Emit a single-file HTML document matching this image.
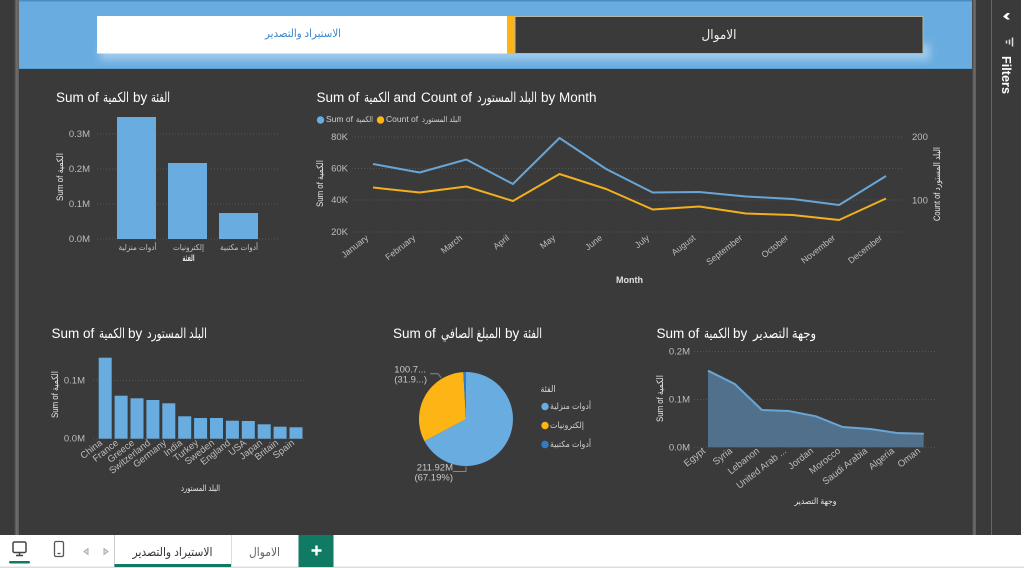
<!DOCTYPE html>
<html><head><meta charset="utf-8"><style>
html,body{margin:0;padding:0;width:1024px;height:568px;overflow:hidden;background:#fff}
svg{display:block;font-family:"Liberation Sans","DejaVu Sans",sans-serif;filter:blur(.35px)}
.t text{font-size:13.500px;fill:#fff}
.a{font-size:8.800px;fill:#bdbdbd}
.y{font-size:9.500px;fill:#bdbdbd}
.n{font-size:8.500px;fill:#e8e8e8}
.g{stroke:#555;stroke-width:1;stroke-dasharray:1 2;fill:none}
</style></head><body>
<svg width="1024" height="568" viewBox="0 0 1024 568" xmlns="http://www.w3.org/2000/svg">
<defs>
<linearGradient id="s" x1="0" x2="1" y1="0" y2="0"><stop offset="0" stop-color="#3a3a3a"/><stop offset=".5" stop-color="#707070"/><stop offset="1" stop-color="#5a5a5a"/></linearGradient>
<filter id="b" x="-5%" y="-100%" width="110%" height="300%"><feGaussianBlur stdDeviation="4"/></filter>
</defs>
<rect width="1021" height="535" fill="#3a3a3a"/>
<rect x="14" width="5" height="535" fill="url(#s)"/>
<rect x="972" width="4" height="535" fill="url(#s)"/>
<rect x="991" width="1" height="535" fill="#666"/>
<rect x="1021" width="3" height="568" fill="#fff"/>
<rect x="19" width="953" height="69" fill="#69ade0"/>
<rect x="19" width="953" height="1.500" fill="#4d8cc0"/>
<rect x="19" y="68" width="953" height="1" fill="#5c9dd0"/>
<rect x="100" y="44" width="830" height="16" fill="#a0cbec" filter="url(#b)"/>
<rect x="97" y="16" width="410" height="37.500" fill="#fff"/>
<rect x="507" y="16" width="8" height="37.500" fill="#fdb515"/>
<rect x="515" y="16.500" width="408" height="37" fill="#3a3a3a" stroke="#b5b5a8" stroke-width="1"/>
<text x="303" y="37" text-anchor="middle" font-size="11" fill="#3b86cc" textLength="76" lengthAdjust="spacingAndGlyphs">الاستيراد والتصدير</text>
<text x="719" y="39" text-anchor="middle" font-size="13" fill="#f0f0f0" textLength="35" lengthAdjust="spacingAndGlyphs">الاموال</text>

<!-- right pane -->
<path d="M1003 16.500l4-3.500h3l-3 3.500 3 3h-3Z" fill="#fff"/>
<path d="M1006.500 40.500v3M1009.500 39.500v5M1012.500 37.500v9" stroke="#ddd" stroke-width="1.500" fill="none"/>
<text transform="translate(1002,56) rotate(90)" font-size="13" font-weight="bold" fill="#fff" textLength="38" lengthAdjust="spacingAndGlyphs">Filters</text>

<!-- chart 1 -->
<g class="t">
<text x="56" y="102">Sum of</text>
<text x="103" y="102" textLength="26" lengthAdjust="spacingAndGlyphs">الكمية</text>
<text x="133" y="102">by</text>
<text x="151" y="102" textLength="19" lengthAdjust="spacingAndGlyphs">الفئة</text>
</g>
<path class="g" d="M97 134H280M97 169H280M97 204H280M97 239H280"/>
<g class="y" text-anchor="end"><text x="90" y="137">0.3M</text><text x="90" y="172">0.2M</text><text x="90" y="207">0.1M</text><text x="90" y="242">0.0M</text></g>
<rect x="117" y="117" width="39" height="122" fill="#69ade0"/>
<rect x="168" y="163" width="39" height="76" fill="#69ade0"/>
<rect x="219" y="213" width="39" height="26" fill="#69ade0"/>
<text class="n" transform="translate(63,201) rotate(-90)" textLength="48" lengthAdjust="spacingAndGlyphs" style="font-size:9px">Sum of الكمية</text>
<g font-size="8" fill="#c4c4c4" text-anchor="middle">
<text x="137.500" y="250" textLength="38" lengthAdjust="spacingAndGlyphs">أدوات منزلية</text>
<text x="188.500" y="250" textLength="31" lengthAdjust="spacingAndGlyphs">إلكترونيات</text>
<text x="239" y="250" textLength="38" lengthAdjust="spacingAndGlyphs">أدوات مكتبية</text>
</g>
<text class="n" x="188.500" y="261" text-anchor="middle" textLength="12" lengthAdjust="spacingAndGlyphs" font-weight="bold">الفئة</text>

<!-- chart 2 -->
<g class="t">
<text x="316.500" y="102">Sum of</text>
<text x="364" y="102" textLength="26" lengthAdjust="spacingAndGlyphs">الكمية</text>
<text x="393.500" y="102">and</text>
<text x="421" y="102">Count of</text>
<text x="477" y="102" textLength="60" lengthAdjust="spacingAndGlyphs">البلد المستورد</text>
<text x="541" y="102">by Month</text>
</g>
<circle cx="320.500" cy="120" r="3.700" fill="#69ade0"/>
<text x="326" y="122" font-size="8.500" fill="#d0d0d0">Sum of</text>
<text x="356" y="122" font-size="8" fill="#d0d0d0" textLength="17" lengthAdjust="spacingAndGlyphs">الكمية</text>
<circle cx="380.500" cy="120" r="3.700" fill="#fdb515"/>
<text x="386" y="122" font-size="8.500" fill="#d0d0d0">Count of</text>
<text x="422" y="122" font-size="8" fill="#d0d0d0" textLength="39" lengthAdjust="spacingAndGlyphs">البلد المستورد</text>
<path class="g" d="M352 137H903M352 168.500H903M352 200H903M352 232H903"/>
<g class="y" text-anchor="end"><text x="348" y="140">80K</text><text x="348" y="171.500">60K</text><text x="348" y="203">40K</text><text x="348" y="235">20K</text></g>
<text x="912" y="140" font-size="9.500" fill="#bdbdbd">200</text>
<text x="912" y="203.500" font-size="9.500" fill="#bdbdbd">100</text>
<text class="n" transform="translate(323,207) rotate(-90)" textLength="47" lengthAdjust="spacingAndGlyphs" style="font-size:9px">Sum of الكمية</text>
<text class="n" transform="translate(940,221) rotate(-90)" textLength="74" lengthAdjust="spacingAndGlyphs" style="font-size:9px">Count of البلد المستورد</text>
<polyline fill="none" stroke="#69a5d5" stroke-width="2" stroke-linejoin="round" points="373,164 419.600,172.500 466.300,159.500 512.900,184 559.500,138 606.100,169 652.700,192.500 699.300,192 745.900,196.500 792.500,199 839.100,205 886,176"/>
<polyline fill="none" stroke="#f2b01e" stroke-width="2" stroke-linejoin="round" points="373,187.500 419.600,192.500 466.300,186.500 512.900,201 559.500,174 606.100,189 652.700,209.500 699.300,206.500 745.900,213.500 792.500,215 839.100,220 886,198.500"/>
<g class="a" text-anchor="end">
<text transform="translate(369,239) rotate(-38)">January</text>
<text transform="translate(416,239) rotate(-38)">February</text>
<text transform="translate(463,239) rotate(-38)">March</text>
<text transform="translate(510,239) rotate(-38)">April</text>
<text transform="translate(556,239) rotate(-38)">May</text>
<text transform="translate(603,239) rotate(-38)">June</text>
<text transform="translate(650,239) rotate(-38)">July</text>
<text transform="translate(696,239) rotate(-38)">August</text>
<text transform="translate(743,239) rotate(-38)">September</text>
<text transform="translate(789,239) rotate(-38)">October</text>
<text transform="translate(836,239) rotate(-38)">November</text>
<text transform="translate(883,239) rotate(-38)">December</text>
</g>
<text x="629.500" y="283" text-anchor="middle" font-size="9" font-weight="bold" fill="#e0e0e0">Month</text>

<!-- chart 3 -->
<g class="t">
<text x="51.500" y="338">Sum of</text>
<text x="99" y="338" textLength="26" lengthAdjust="spacingAndGlyphs">الكمية</text>
<text x="128" y="338">by</text>
<text x="147" y="338" textLength="60" lengthAdjust="spacingAndGlyphs">البلد المستورد</text>
</g>
<path class="g" d="M93 380.500H305M93 438.700H305"/>
<g class="y" text-anchor="end"><text x="85" y="383.500">0.1M</text><text x="85" y="441.700">0.0M</text></g>
<text class="n" transform="translate(58,418) rotate(-90)" textLength="47" lengthAdjust="spacingAndGlyphs" style="font-size:9px">Sum of الكمية</text>
<g fill="#69ade0">
<rect x="98.700" y="357.700" width="13" height="81"/>
<rect x="114.600" y="395.700" width="13" height="43"/>
<rect x="130.500" y="398.300" width="13" height="40.400"/>
<rect x="146.400" y="400" width="13" height="38.700"/>
<rect x="162.300" y="403.300" width="13" height="35.400"/>
<rect x="178.200" y="416.300" width="13" height="22.400"/>
<rect x="194.100" y="418" width="13" height="20.700"/>
<rect x="210" y="418" width="13" height="20.700"/>
<rect x="225.900" y="420.700" width="13" height="18"/>
<rect x="241.800" y="421" width="13" height="17.700"/>
<rect x="257.700" y="424.300" width="13" height="14.400"/>
<rect x="273.600" y="426.700" width="13" height="12"/>
<rect x="289.500" y="427.300" width="13" height="11.400"/>
</g>
<g class="a" text-anchor="end" style="font-size:9.500px">
<text transform="translate(103,444) rotate(-38)">China</text>
<text transform="translate(119,444) rotate(-38)">France</text>
<text transform="translate(135,444) rotate(-38)">Greece</text>
<text transform="translate(151,444) rotate(-38)">Switzerland</text>
<text transform="translate(167,444) rotate(-38)">Germany</text>
<text transform="translate(183,444) rotate(-38)">India</text>
<text transform="translate(199,444) rotate(-38)">Turkey</text>
<text transform="translate(215,444) rotate(-38)">Sweden</text>
<text transform="translate(231,444) rotate(-38)">England</text>
<text transform="translate(247,444) rotate(-38)">USA</text>
<text transform="translate(263,444) rotate(-38)">Japan</text>
<text transform="translate(279,444) rotate(-38)">Britain</text>
<text transform="translate(295,444) rotate(-38)">Spain</text>
</g>
<text class="n" x="200.500" y="491" text-anchor="middle" textLength="39" lengthAdjust="spacingAndGlyphs">البلد المستورد</text>

<!-- pie -->
<g class="t">
<text x="393" y="338">Sum of</text>
<text x="441" y="338" textLength="60" lengthAdjust="spacingAndGlyphs">المبلغ الصافي</text>
<text x="505" y="338">by</text>
<text x="523" y="338" textLength="19" lengthAdjust="spacingAndGlyphs">الفئة</text>
</g>
<path d="M466 419V372A47 47 0 1 1 424.500 441.100Z" fill="#69ade0"/>
<path d="M466 419L424.500 441.100A47 47 0 0 1 463.300 372.100Z" fill="#fdb515"/>
<path d="M466 419L463.300 372.100A47 47 0 0 1 466 372Z" fill="#2f7dc4"/>
<path d="M430 373.700h8l3 4M453 471.500h13v-5" fill="none" stroke="#888" stroke-width="1"/>
<g font-size="9.500" fill="#c8c8c8" text-anchor="end">
<text x="426" y="372.500">100.7...</text>
<text x="427" y="382.500">(31.9...)</text>
<text x="453" y="470.500">211.92M</text>
<text x="453" y="480.500">(67.19%)</text>
</g>
<text x="548" y="392" text-anchor="middle" font-size="9" fill="#d8d8d8" textLength="15" lengthAdjust="spacingAndGlyphs">الفئة</text>
<circle cx="545" cy="406.500" r="3.700" fill="#69ade0"/>
<circle cx="545" cy="425.500" r="3.700" fill="#fdb515"/>
<circle cx="545" cy="444.500" r="3.700" fill="#2f7dc4"/>
<g font-size="8.500" fill="#d0d0d0">
<text x="550" y="409" textLength="41" lengthAdjust="spacingAndGlyphs">أدوات منزلية</text>
<text x="550" y="428" textLength="34" lengthAdjust="spacingAndGlyphs">إلكترونيات</text>
<text x="550" y="447" textLength="41" lengthAdjust="spacingAndGlyphs">أدوات مكتبية</text>
</g>

<!-- area -->
<g class="t">
<text x="656.500" y="338">Sum of</text>
<text x="704" y="338" textLength="26" lengthAdjust="spacingAndGlyphs">الكمية</text>
<text x="733" y="338">by</text>
<text x="753" y="338" textLength="63" lengthAdjust="spacingAndGlyphs">وجهة التصدير</text>
</g>
<path class="g" d="M694 351.500H935M694 399.500H935M694 447.300H935"/>
<g class="y" text-anchor="end"><text x="690" y="354.500">0.2M</text><text x="690" y="402.500">0.1M</text><text x="690" y="450.300">0.0M</text></g>
<text class="n" transform="translate(663,422) rotate(-90)" textLength="47" lengthAdjust="spacingAndGlyphs" style="font-size:9px">Sum of الكمية</text>
<path d="M708 370.700L734.700 384 762 410 788.700 411 816 416.300 842.700 427 870.300 429 897 433 923.700 433.700V447.300H708Z" fill="#50708c"/>
<polyline fill="none" stroke="#69a5d5" stroke-width="2" points="708,370.700 734.700,384 762,410 788.700,411 816,416.300 842.700,427 870.300,429 897,433 923.700,433.700"/>
<g class="a" text-anchor="end" style="font-size:9.500px">
<text transform="translate(706,452) rotate(-38)">Egypt</text>
<text transform="translate(733,452) rotate(-38)">Syria</text>
<text transform="translate(760,452) rotate(-38)">Lebanon</text>
<text transform="translate(787,452) rotate(-38)">United Arab ...</text>
<text transform="translate(814,452) rotate(-38)">Jordan</text>
<text transform="translate(841,452) rotate(-38)">Morocco</text>
<text transform="translate(868,452) rotate(-38)">Saudi Arabia</text>
<text transform="translate(895,452) rotate(-38)">Algeria</text>
<text transform="translate(921,452) rotate(-38)">Oman</text>
</g>
<text class="n" x="815.500" y="504" text-anchor="middle" textLength="42" lengthAdjust="spacingAndGlyphs">وجهة التصدير</text>

<!-- bottom bar -->
<rect y="535" width="1024" height="33" fill="#fff"/>
<rect y="566.500" width="1024" height="1.500" fill="#dcdcdc"/>
<rect x="13" y="542" width="13" height="10.500" rx="1.500" fill="none" stroke="#444" stroke-width="1.500"/>
<path d="M19.500 552.500v2.500M16 555.500h7" stroke="#444" stroke-width="1.500"/>
<rect x="9" y="561" width="21" height="2.500" rx="1.200" fill="#117a65"/>
<rect x="54.500" y="541.500" width="9" height="15" rx="1.500" fill="none" stroke="#555" stroke-width="1.300"/>
<path d="M57.500 553.500h3" stroke="#555" stroke-width="1.300"/>
<path d="M88 548.500l-4 3 4 3ZM104 548.500l4 3-4 3Z" fill="#ddd" stroke="#aaa" stroke-width="1"/>
<rect x="114" y="535" width="1" height="32" fill="#ccc"/>
<rect x="231" y="535" width="1" height="32" fill="#ddd"/>
<rect x="114.500" y="564" width="116.500" height="3" fill="#117a65"/>
<text x="172.500" y="556" text-anchor="middle" font-size="12" fill="#333" textLength="80" lengthAdjust="spacingAndGlyphs">الاستيراد والتصدير</text>
<text x="264.500" y="556" text-anchor="middle" font-size="12" fill="#666" textLength="31" lengthAdjust="spacingAndGlyphs">الاموال</text>
<rect x="298.500" y="535" width="35" height="32" fill="#117a65"/>
<path d="M311.500 550.500h10M316.500 545.500v10" stroke="#fff" stroke-width="2.400"/>
</svg>
</body></html>
